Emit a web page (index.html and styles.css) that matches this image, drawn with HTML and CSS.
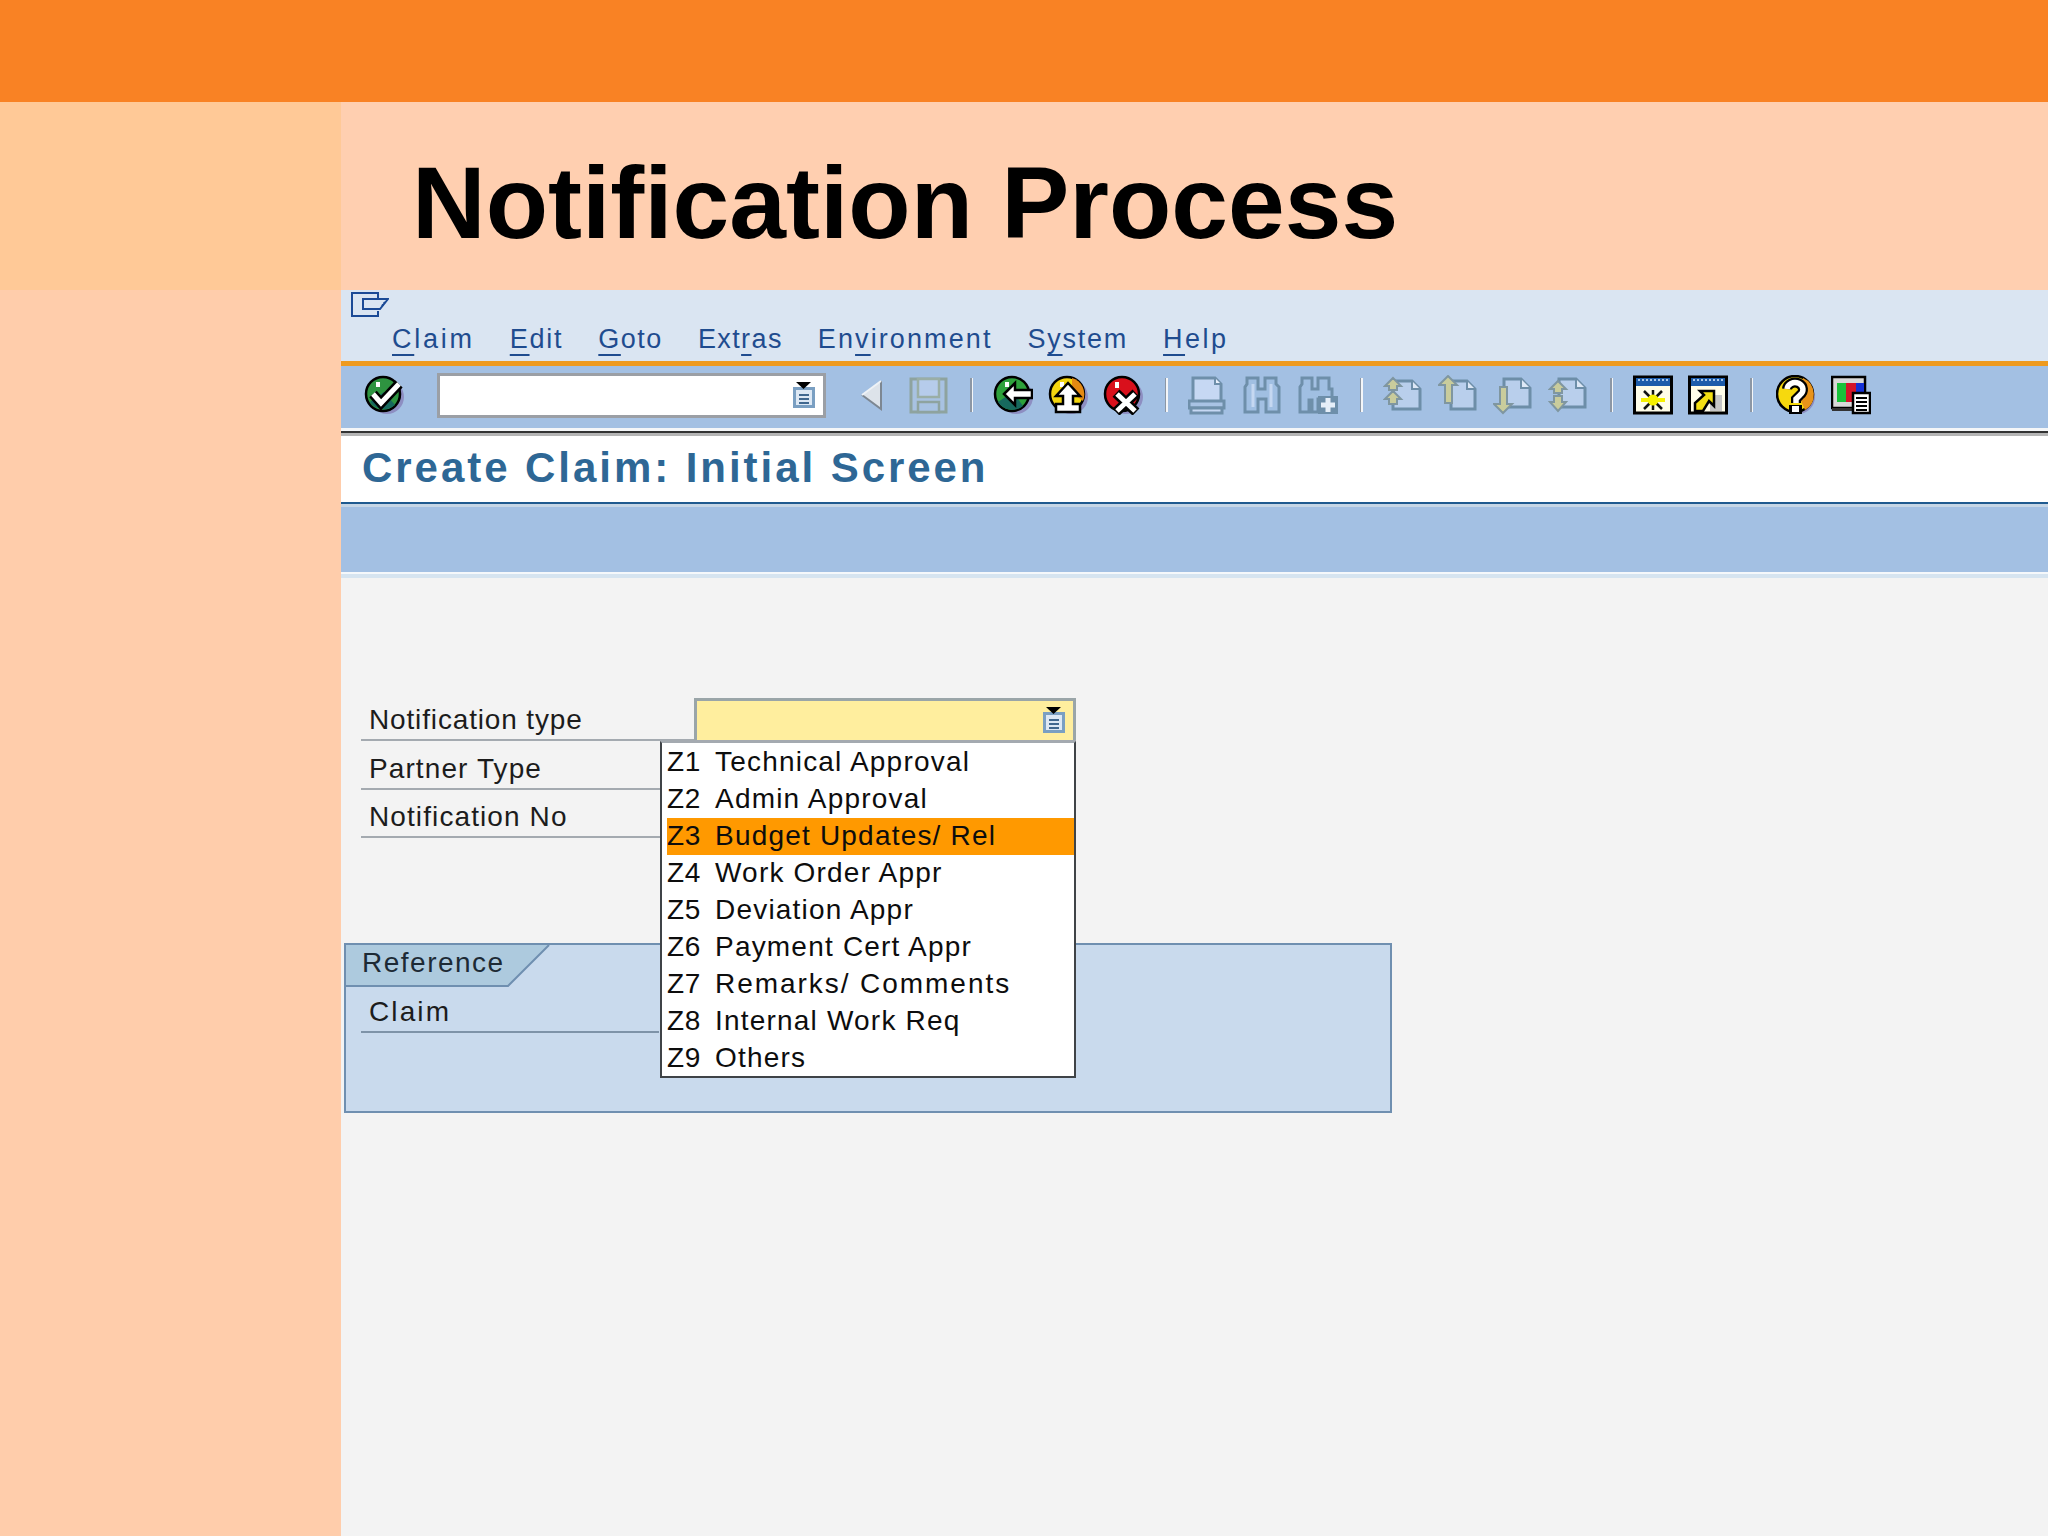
FILE: index.html
```html
<!DOCTYPE html>
<html lang="en">
<head>
<meta charset="utf-8">
<title>Notification Process</title>
<link rel="stylesheet" href="styles.css">
</head>
<body>
<div class="slide">
  <div class="topbar"></div>
  <div class="corner"></div>
  <header class="hero"><h1 class="hero-title">Notification Process</h1></header>
  <aside class="side"></aside>
  <main class="sap">
    <section class="menubar">
      <svg class="menu-icon" viewBox="0 0 38 25" fill="none" stroke="#1b4a96" stroke-width="2"><path d="M27 6V1H1V24H27V19"/><path d="M37 7H12V17H29Z"/><path d="M31 14l3-4" stroke-dasharray="2 1"/></svg>
      <nav class="menu">
        <span><u>C</u>laim</span><span><u>E</u>dit</span><span><u>G</u>oto</span><span>Ext<u>r</u>as</span><span>En<u>v</u>ironment</span><span>S<u>y</u>stem</span><span><u>H</u>elp</span>
      </nav>
    </section>
    <section class="toolbar">
      <svg class="ico" viewBox="0 0 40 40"><circle cx="23" cy="22" r="17" fill="#8d8ec2"/><circle cx="19" cy="19" r="17" fill="#2e9440" stroke="#000" stroke-width="2.5"/><path d="M6 27a17 17 0 0 0 25 3L20 17z" fill="#17695e"/><rect x="12" y="7" width="4" height="5" fill="#fff"/><path d="M9 19l8 9L35 9" fill="none" stroke="#000" stroke-width="10"/><path d="M9 19l8 9L35 9" fill="none" stroke="#fff" stroke-width="5"/></svg>
      <div class="command"><svg class="help-ico" viewBox="0 0 24 27"><rect x="1" y="5" width="22" height="21" fill="#7a9fc2"/><rect x="4" y="8" width="16" height="15" fill="#dde8f4"/><path d="M7 13h10M7 17h10M7 21h10" stroke="#41688f" stroke-width="2"/><path d="M4 0h15l-7.500 7z" fill="#000"/></svg></div>
      <svg class="ico back-tri" viewBox="0 0 40 40"><path d="M10 20L29 6V34Z" fill="#dde3ea"/><path d="M29 6V34L10 20" fill="none" stroke="#7d8792" stroke-width="2"/><path d="M29 6L10 20" stroke="#eef2f6" stroke-width="2"/></svg>
      <svg class="ico" viewBox="0 0 40 40"><rect x="3" y="4" width="35" height="33" fill="#a8c2e2" stroke="#8ea39f" stroke-width="3"/><rect x="10" y="4" width="21" height="18" fill="#b6cceb" stroke="#9aaea6" stroke-width="2.5"/><rect x="10" y="27" width="21" height="10" fill="#a8c2e2" stroke="#8ea39f" stroke-width="2.5"/></svg>
      <i class="sep"></i>
      <svg class="ico" viewBox="0 0 40 40"><circle cx="23" cy="22" r="17" fill="#8d8ec2"/><circle cx="19" cy="19" r="17" fill="#2ea13c" stroke="#000" stroke-width="2.5"/><path d="M5 27a17 17 0 0 0 25 4L20 17z" fill="#17695e"/><rect x="12" y="7" width="4" height="5" fill="#fff"/><path d="M11 19L22 8v7h17v8H22v7z" fill="#fff" stroke="#000" stroke-width="2.5"/></svg>
      <svg class="ico" viewBox="0 0 40 40"><circle cx="23" cy="22" r="17" fill="#8d8ec2"/><circle cx="19" cy="19" r="17" fill="#f4d60f" stroke="#000" stroke-width="2.5"/><path d="M24 3a17 17 0 0 1 11 23L24 18z" fill="#e58a12"/><rect x="12" y="7" width="4" height="5" fill="#fff"/><path d="M20 8L32 21H25V29H32V37H8V29H15V21H8z" fill="#fff" stroke="#000" stroke-width="2.5"/></svg>
      <svg class="ico" viewBox="0 0 40 40"><circle cx="23" cy="22" r="17" fill="#8d8ec2"/><circle cx="19" cy="19" r="17" fill="#d9101c" stroke="#000" stroke-width="2.5"/><rect x="12" y="7" width="4" height="6" fill="#fff"/><path d="M13 18l20 19M33 18L13 37" stroke="#000" stroke-width="10"/><path d="M14 19l18 17M32 19L14 36" stroke="#fff" stroke-width="5"/></svg>
      <i class="sep"></i>
      <svg class="ico" viewBox="0 0 40 40"><path d="M5 3H27L33 9V29H5Z" fill="#c6d8f3" stroke="#6e8faa" stroke-width="3"/><path d="M27 3V9H33" fill="#eaf1fb" stroke="#6e8faa" stroke-width="2"/><rect x="1" y="26" width="35" height="7" fill="#a9c3e4" stroke="#6e8faa" stroke-width="3"/><rect x="3" y="33" width="31" height="5" fill="#c6d8f3" stroke="#6e8faa" stroke-width="3"/></svg>
      <svg class="ico" viewBox="0 0 40 40"><path d="M2 37V12L4 9V3H15V14H22V3H33V9L36 12V37H23V24H15V37Z" fill="#a0bfe2" stroke="#6e8faa" stroke-width="3"/><path d="M10 9V32M28 9V32" stroke="#c5d8f1" stroke-width="3"/></svg>
      <svg class="ico" viewBox="0 0 40 40"><path d="M2 37V12L4 9V3H14V14H20V3H31V14H34V24H20V37H14V25H11V37Z" fill="#a0bfe2" stroke="#6e8faa" stroke-width="3"/><rect x="20" y="21" width="20" height="18" fill="#6e8faa"/><path d="M30 23V37M23 30H37" stroke="#e6eff9" stroke-width="5"/></svg>
      <i class="sep"></i>
      <svg class="ico" viewBox="0 0 40 40"><path d="M10 6H29L37 14V34H10Z" fill="#b9cfec" stroke="#6d8ea8" stroke-width="3"/><path d="M29 6V14H37" fill="#dde8f6" stroke="#6d8ea8" stroke-width="2"/><path d="M10 3l8 8h-4v4H6v-4H2zM10 16l8 8h-4v5H6v-5H2z" fill="#c9cc9c" stroke="#7f96a0" stroke-width="2"/></svg>
      <svg class="ico" viewBox="0 0 40 40"><path d="M13 6H29L37 14V34H13Z" fill="#b9cfec" stroke="#6d8ea8" stroke-width="3"/><path d="M29 6V14H37" fill="#dde8f6" stroke="#6d8ea8" stroke-width="2"/><path d="M10 1l9 9h-5v18H7V10H1z" fill="#c9cc9c" stroke="#7f96a0" stroke-width="2"/></svg>
      <svg class="ico" viewBox="0 0 40 40"><path d="M11 4H28L37 13V32H11Z" fill="#b9cfec" stroke="#6d8ea8" stroke-width="3"/><path d="M28 4V13H37" fill="#dde8f6" stroke="#6d8ea8" stroke-width="2"/><path d="M7 12h7v17h5l-9 9-9-9h6z" fill="#c9cc9c" stroke="#7f96a0" stroke-width="2"/></svg>
      <svg class="ico" viewBox="0 0 40 40"><path d="M11 4H28L37 13V32H11Z" fill="#b9cfec" stroke="#6d8ea8" stroke-width="3"/><path d="M28 4V13H37" fill="#dde8f6" stroke="#6d8ea8" stroke-width="2"/><path d="M10 6l8 8h-4v4H6v-4H2zM6 21h8v6h4l-8 9-8-9h4z" fill="#c9cc9c" stroke="#7f96a0" stroke-width="2"/></svg>
      <i class="sep"></i>
      <svg class="ico" viewBox="0 0 40 40"><rect x="1.500" y="2" width="37" height="36" fill="#fffde8" stroke="#000" stroke-width="3"/><rect x="3" y="3" width="34" height="8" fill="#1c5cab"/><path d="M5 5h30" stroke="#a9c7ea" stroke-width="2" stroke-dasharray="2 2"/><path d="M20 15V35M8 25H32M11 16L29 34M29 16L11 34" stroke="#111" stroke-width="2.500"/><path d="M8 25H32" stroke="#f6f000" stroke-width="4"/><circle cx="20" cy="25" r="5.500" fill="#f6f000"/></svg>
      <svg class="ico" viewBox="0 0 40 40"><rect x="1.500" y="2" width="37" height="36" fill="#fffde8" stroke="#000" stroke-width="3"/><rect x="3" y="3" width="34" height="8" fill="#1c5cab"/><path d="M5 5h30" stroke="#a9c7ea" stroke-width="2" stroke-dasharray="2 2"/><path d="M22 20h12v16H22z" fill="#c6c6c6"/><path d="M7 36V28L16 20L12 16H26V31L21 26L15 36Z" fill="#f3df12" stroke="#000" stroke-width="2.500"/></svg>
      <i class="sep sep-last"></i>
      <svg class="ico" viewBox="0 0 40 40"><circle cx="22" cy="22" r="17" fill="#8d8ec2"/><circle cx="19" cy="19" r="18" fill="#f6d90e" stroke="#000" stroke-width="2.500"/><path d="M27 3a18 18 0 0 1 2 32L22 19z" fill="#e8931a"/><path d="M11 14a8 7 0 1 1 13 6l-4 4v4" fill="none" stroke="#000" stroke-width="10"/><path d="M11 14a8 7 0 1 1 13 6l-4 4v4" fill="none" stroke="#fff" stroke-width="5.500"/><rect x="13" y="30" width="13" height="9" fill="#000"/><rect x="16" y="31" width="7" height="6" fill="#fff"/></svg>
      <svg class="ico" viewBox="0 0 40 40"><rect x="1" y="2" width="33" height="31" fill="#d9d9d9" stroke="#000" stroke-width="2.500"/><rect x="6" y="8" width="9" height="19" fill="#19c23a"/><rect x="15" y="8" width="10" height="19" fill="#d4142a"/><rect x="25" y="8" width="8" height="19" fill="#1430d6"/><rect x="1" y="33" width="22" height="3" fill="#333"/><rect x="22" y="18" width="17" height="20" fill="#fff" stroke="#000" stroke-width="2.500"/><path d="M25 23h11M25 27h11M25 31h11M25 35h11" stroke="#000" stroke-width="1.800"/></svg>
    </section>
    <section class="title-strip"><h2 class="screen-title">Create Claim: Initial Screen</h2></section>
    <section class="app-band"></section>
    <section class="workarea">
      <div class="form">
        <div class="row row-first">
          <span class="label">Notification type</span>
          <div class="field"><svg class="help-ico" viewBox="0 0 24 27"><rect x="1" y="5" width="22" height="21" fill="#7a9fc2"/><rect x="4" y="8" width="16" height="15" fill="#dde8f4"/><path d="M7 13h10M7 17h10M7 21h10" stroke="#41688f" stroke-width="2"/><path d="M4 0h15l-7.500 7z" fill="#000"/></svg></div>
        </div>
        <div class="row"><span class="label label-wide">Partner Type</span></div>
        <div class="row"><span class="label label-wide">Notification No</span></div>
        <ul class="dropdown">
          <li class="opt"><span class="code">Z1</span><span>Technical Approval</span></li>
          <li class="opt"><span class="code">Z2</span><span>Admin Approval</span></li>
          <li class="opt opt-active"><span class="code">Z3</span><span>Budget Updates/ Rel</span></li>
          <li class="opt"><span class="code">Z4</span><span>Work Order Appr</span></li>
          <li class="opt"><span class="code">Z5</span><span>Deviation Appr</span></li>
          <li class="opt"><span class="code">Z6</span><span>Payment Cert Appr</span></li>
          <li class="opt"><span class="code">Z7</span><span class="opt-wide">Remarks/ Comments</span></li>
          <li class="opt"><span class="code">Z8</span><span>Internal Work Req</span></li>
          <li class="opt"><span class="code">Z9</span><span>Others</span></li>
        </ul>
        <div class="refbox">
          <div class="tab">
            <svg class="tab-shape" viewBox="0 0 204 42"><path d="M0 0H203L162 41H0Z" fill="#adcade"/><path d="M203 0L162 41H0" fill="none" stroke="#6f8fb0" stroke-width="2" /></svg>
            <span class="tab-text">Reference</span>
          </div>
          <div class="row row-ref"><span class="label label-claim">Claim</span></div>
        </div>
      </div>
    </section>
  </main>
</div>
</body>
</html>
```

FILE: styles.css
```css
* { box-sizing: border-box; }
html, body { margin: 0; padding: 0; }
body { font-family: "Liberation Sans", Arial, sans-serif; background: #ffcdab; }

.slide {
  width: 2048px;
  height: 1536px;
  display: grid;
  grid-template-columns: 341px 1fr;
  grid-template-rows: 102px 188px 1fr;
  overflow: hidden;
}
.topbar { grid-column: 1 / 3; background: #f98224; }
.corner { background: #ffc997; }
.hero { background: #ffcfb0; display: flex; align-items: center; padding: 14px 0 0 71px; }
.hero-title { margin: 0; font-size: 102px; font-weight: 700; color: #000; line-height: 1; }
.side { background: #ffcdab; }

.sap { display: flex; flex-direction: column; background: #f3f3f3; }

.menubar { height: 76px; background: #dae5f2; border-bottom: 5px solid #ee9a1f; padding: 2px 0 0 10px; flex: none; }
.menu-icon { display: block; width: 38px; height: 25px; }
.menu {
  display: flex;
  gap: 35px;
  margin: 7px 0 0 41px;
  font-size: 27px;
  line-height: 30px;
  letter-spacing: 1.75px;
  color: #1f4c8f;
}
.menu span:nth-child(1) { letter-spacing: 2.75px; }
.menu span:nth-child(3) { letter-spacing: 1.5px; }
.menu span:nth-child(4) { letter-spacing: 1.4px; }
.menu span:nth-child(5) { letter-spacing: 2.1px; }
.menu span:nth-child(7) { letter-spacing: 2.45px; }
.menu u { text-decoration: underline; text-decoration-thickness: 2px; text-underline-offset: 6px; text-decoration-skip-ink: none; }

.toolbar {
  height: 62px;
  flex: none;
  background: #a3c0e3;
  display: flex;
  align-items: center;
  gap: 15px;
  padding: 0 0 4px 23px;
}
.ico { width: 40px; height: 40px; flex: none; display: block; }
.sep { width: 3px; height: 34px; flex: none; margin: 0 5px 0 7px; background: linear-gradient(90deg, #8c97a5 50%, #f4f6f8 50%); }
.sep-last { margin-right: 8px; }
.command {
  width: 389px;
  height: 45px;
  margin: 0 11px 0 18px;
  background: #fff;
  border: 3px solid #9b9fa5;
  display: flex;
  align-items: center;
  justify-content: flex-end;
  padding-right: 7px;
  flex: none;
}
.help-ico { width: 24px; height: 27px; display: block; }
.back-tri { margin-right: 1px; }

.title-strip {
  height: 79px;
  flex: none;
  background: #fff;
  border-top: 3px solid #f4f6f8;
  border-bottom: 3px solid #c6d6e6;
  display: flex;
  align-items: center;
  padding: 0 0 0 21px;
  box-shadow: inset 0 2px 0 #333, inset 0 5px 0 #b5b5b5, inset 0 -2px 0 #1f5a8f;
}
.screen-title { margin: 0; font-size: 42px; font-weight: 700; color: #2e6795; letter-spacing: 2.95px; line-height: 1; }
.app-band { height: 67px; flex: none; background: #a3c0e3; border-bottom: 2px solid #f5f8fb; }

.workarea { flex: 1; border-top: 4px solid #d6e4f0; padding-top: 115px; }
.form { position: relative; }
.row {
  height: 48.300px;
  width: 319px;
  margin-left: 20px;
  border-bottom: 2.500px solid #a4aab0;
  padding-left: 8px;
  display: flex;
  align-items: flex-end;
}
.row-first { width: 715px; }
.label { font-size: 28px; letter-spacing: 0.85px; color: #1c1c1c; line-height: 38px; flex: none; }
.label-wide { letter-spacing: 1.1px; }
.label-claim { letter-spacing: 2.1px; }
.row-first .label { width: 325px; }
.field {
  flex: none;
  width: 382px;
  height: 42px;
  background: #ffee9e;
  border: 3px solid #9aa5a8;
  border-bottom: 0;
  display: flex;
  align-items: center;
  justify-content: flex-end;
  padding-right: 7px;
  margin-bottom: -1px;
}

.dropdown {
  position: absolute;
  left: 319px;
  top: 48px;
  z-index: 2;
  width: 416px;
  height: 337px;
  margin: 0;
  padding: 1px 0 0 5px;
  list-style: none;
  background: #fff;
  border: 2.500px solid #3f4347;
  border-top-color: #a4aab0;
}
.opt {
  height: 37px;
  display: flex;
  align-items: center;
  padding-bottom: 2px;
  font-size: 28px;
  letter-spacing: 1.2px;
  color: #0d0d0d;
}
.opt-active { background: #ff9900; }
.opt-wide { letter-spacing: 1.95px; }
.code { width: 48px; flex: none; letter-spacing: 0.75px; }

.refbox {
  margin: 105px 0 0 3px;
  width: 1048px;
  height: 170px;
  background: #c9daed;
  border: 2px solid #6f8fb0;
}
.tab { position: relative; width: 204px; height: 42px; }
.tab-shape { position: absolute; left: 0; top: 0; width: 204px; height: 42px; }
.tab-text { position: absolute; left: 16px; top: -1px; font-size: 28px; letter-spacing: 1.5px; line-height: 38px; color: #1d2a35; }
.row-ref { height: 46px; width: 298px; margin-left: 15px; border-bottom-color: #7e93a8; }
```
